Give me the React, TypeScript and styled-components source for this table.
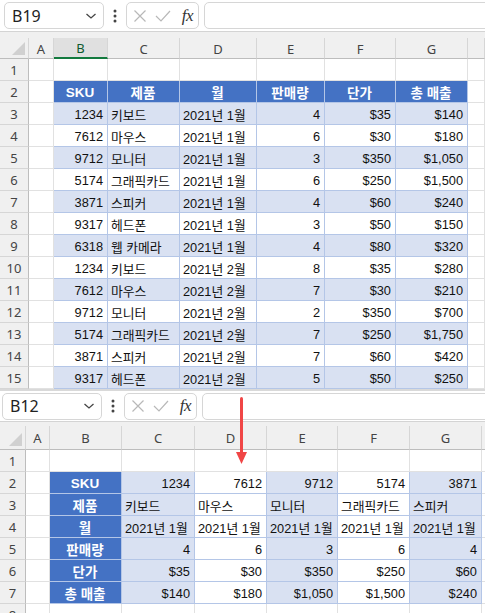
import React from "react";
import styled, { createGlobalStyle } from "styled-components";

const Global = createGlobalStyle`
  html, body { margin: 0; padding: 0; background: #ffffff; }
  body { font-family: "Liberation Sans", "Noto Sans CJK KR", sans-serif; }
  * { box-sizing: border-box; }
`;

const Page = styled.div`
  position: relative;
  width: 485px;
  height: 613px;
  overflow: hidden;
  background: #ffffff;
`;

const SheetWrap = styled.section<{ $top?: boolean }>`
  display: flex;
  flex-direction: column;
  border-top: ${(p) => (p.$top ? "none" : "2px solid #d9d9d9")};
`;

const Toolbar = styled.div<{ $pad: number; $h: number }>`
  display: flex;
  align-items: center;
  height: ${(p) => p.$h}px;
  padding-left: ${(p) => p.$pad}px;
  background: #ffffff;
  border-bottom: 1px solid #d4d4d4;
`;

const NameBox = styled.div`
  width: 100px;
  height: 27px;
  border: 1px solid #d6d6d6;
  border-radius: 5px;
  display: flex;
  align-items: center;
  justify-content: space-between;
  padding: 0 6px 0 7px;
  font-family: "Noto Sans", "Liberation Sans", sans-serif;
  font-size: 16px;
  color: #222;
`;

const Dots = styled.div`
  width: 22px;
  display: flex;
  justify-content: center;
`;

const FxBox = styled.div`
  width: 73px;
  height: 27px;
  border: 1px solid #d6d6d6;
  border-radius: 5px;
  display: flex;
  align-items: center;
  padding: 0 5px 0 6px;
  gap: 8px;
`;

const FxText = styled.span`
  font-family: "Liberation Serif", serif;
  font-style: italic;
  font-size: 17px;
  color: #333;
  margin-left: auto;
  letter-spacing: -0.5px;
`;

const Formula = styled.div`
  flex: 1;
  height: 27px;
  margin-left: 5px;
  margin-right: -8px;
  border: 1px solid #d6d6d6;
  border-radius: 5px;
`;

const Strip = styled.div<{ $h: number }>`
  height: ${(p) => p.$h}px;
  background: #f0f0f0;
`;

const Grid = styled.div<{ $cols: string; $head: number }>`
  display: grid;
  grid-template-columns: ${(p) => p.$cols};
  grid-template-rows: ${(p) => p.$head}px;
  grid-auto-rows: 22px;
  font-size: 12.8px;
  color: #111;
`;

const Corner = styled.div`
  background: #f0f0f0;
  border-right: 1px solid #d6d6d6;
  border-bottom: 1px solid #bdbdbd;
  display: flex;
  align-items: flex-end;
  justify-content: flex-end;
  padding: 0 3px 3px 0;
`;

const ColHead = styled.div<{ $sel?: boolean }>`
  display: flex;
  align-items: center;
  justify-content: center;
  background: ${(p) => (p.$sel ? "#e0e0e0" : "#f0f0f0")};
  border-right: 1px solid #d6d6d6;
  border-bottom: ${(p) => (p.$sel ? "2px solid #137a3e" : "1px solid #bdbdbd")};
  font-family: "Noto Sans", sans-serif;
  font-size: 13px;
  color: ${(p) => (p.$sel ? "#0f5a2e" : "#444")};
  padding-top: 1px;
`;

const RowHead = styled.div`
  display: flex;
  align-items: center;
  justify-content: center;
  background: #f0f0f0;
  border-right: 1px solid #bdbdbd;
  border-bottom: 1px solid #d6d6d6;
  font-family: "Noto Sans", sans-serif;
  font-size: 13px;
  color: #444;
`;

type Kind = "empty" | "head" | "band" | "plain";

const Cell = styled.div<{ $kind: Kind; $align: "left" | "right" | "center" }>`
  display: flex;
  align-items: center;
  justify-content: ${(p) =>
    p.$align === "right" ? "flex-end" : p.$align === "center" ? "center" : "flex-start"};
  padding: 1px 4px 0 3px;
  white-space: nowrap;
  overflow: hidden;
  background: ${(p) =>
    p.$kind === "head" ? "#4472c4" : p.$kind === "band" ? "#d9e1f2" : "#ffffff"};
  color: ${(p) => (p.$kind === "head" ? "#ffffff" : "#111")};
  font-weight: ${(p) => (p.$kind === "head" ? 700 : 400)};
  font-size: ${(p) => (p.$kind === "head" ? "13.5px" : "inherit")};
  border-right: 1px solid ${(p) => (p.$kind === "empty" ? "#e1e1e1" : "#b4c6e7")};
  border-bottom: 1px solid ${(p) => (p.$kind === "empty" ? "#e1e1e1" : "#b4c6e7")};
`;

const ArrowLayer = styled.div`
  position: absolute;
  left: 235px;
  top: 397px;
  width: 13px;
  height: 68px;
`;

const Chevron = () => (
  <svg width="12" height="8" viewBox="0 0 12 8">
    <polyline points="1.5,2 6,6 10.5,2" fill="none" stroke="#444" strokeWidth="1.3" />
  </svg>
);

const VDots = () => (
  <svg width="4" height="14" viewBox="0 0 4 14">
    <circle cx="2" cy="2" r="1.5" fill="#444" />
    <circle cx="2" cy="7" r="1.5" fill="#444" />
    <circle cx="2" cy="12" r="1.5" fill="#444" />
  </svg>
);

const XIcon = () => (
  <svg width="14" height="14" viewBox="0 0 14 14">
    <path d="M1.5 1.5 L12.5 12.5 M12.5 1.5 L1.5 12.5" stroke="#b8b8b8" strokeWidth="1.2" fill="none" />
  </svg>
);

const CheckIcon = () => (
  <svg width="16" height="14" viewBox="0 0 16 14">
    <path d="M1 7 L6 12 L15 2" stroke="#b8b8b8" strokeWidth="1.2" fill="none" />
  </svg>
);

const CornerTri = () => (
  <svg width="13" height="13" viewBox="0 0 13 13">
    <polygon points="13,0 13,13 0,13" fill="#d0d0d0" />
  </svg>
);

type Row = { n: number; cells: { t: string; k: Kind; a: "left" | "right" | "center" }[] };

const FormulaBar = ({ name, pad, h }: { name: string; pad: number; h: number }) => (
  <Toolbar $pad={pad} $h={h}>
    <NameBox>
      <span>{name}</span>
      <Chevron />
    </NameBox>
    <Dots>
      <VDots />
    </Dots>
    <FxBox>
      <XIcon />
      <CheckIcon />
      <FxText>fx</FxText>
    </FxBox>
    <Formula />
  </Toolbar>
);

const Sheet = ({
  name,
  pad,
  barH,
  strip,
  head,
  cols,
  letters,
  sel,
  rows,
  top,
}: {
  name: string;
  pad: number;
  barH: number;
  strip: number;
  head: number;
  cols: string;
  letters: string[];
  sel?: string;
  rows: Row[];
  top?: boolean;
}) => (
  <SheetWrap $top={top}>
    <FormulaBar name={name} pad={pad} h={barH} />
    <Strip $h={strip} />
    <Grid $cols={cols} $head={head}>
      <Corner>
        <CornerTri />
      </Corner>
      {letters.map((l, i) => (
        <ColHead key={i} $sel={l === sel}>
          {l}
        </ColHead>
      ))}
      {rows.map((r) => (
        <React.Fragment key={r.n}>
          <RowHead>{r.n}</RowHead>
          {r.cells.map((c, i) => (
            <Cell key={i} $kind={c.k} $align={c.a}>
              {c.t}
            </Cell>
          ))}
        </React.Fragment>
      ))}
    </Grid>
  </SheetWrap>
);

const data: [string, string, string, string, string, string][] = [
  ["1234", "키보드", "2021년 1월", "4", "$35", "$140"],
  ["7612", "마우스", "2021년 1월", "6", "$30", "$180"],
  ["9712", "모니터", "2021년 1월", "3", "$350", "$1,050"],
  ["5174", "그래픽카드", "2021년 1월", "6", "$250", "$1,500"],
  ["3871", "스피커", "2021년 1월", "4", "$60", "$240"],
  ["9317", "헤드폰", "2021년 1월", "3", "$50", "$150"],
  ["6318", "웹 카메라", "2021년 1월", "4", "$80", "$320"],
  ["1234", "키보드", "2021년 2월", "8", "$35", "$280"],
  ["7612", "마우스", "2021년 2월", "7", "$30", "$210"],
  ["9712", "모니터", "2021년 2월", "2", "$350", "$700"],
  ["5174", "그래픽카드", "2021년 2월", "7", "$250", "$1,750"],
  ["3871", "스피커", "2021년 2월", "7", "$60", "$420"],
  ["9317", "헤드폰", "2021년 2월", "5", "$50", "$250"],
];

const headers = ["SKU", "제품", "월", "판매량", "단가", "총 매출"];
const aligns: ("left" | "right")[] = ["right", "left", "left", "right", "right", "right"];

const empty = (n: number) =>
  Array.from({ length: n }, () => ({ t: "", k: "empty" as Kind, a: "left" as const }));

const topRows: Row[] = [
  { n: 1, cells: empty(8) },
  {
    n: 2,
    cells: [
      ...empty(1),
      ...headers.map((h) => ({ t: h, k: "head" as Kind, a: "center" as const })),
      ...empty(1),
    ],
  },
  ...data.map((d, i) => ({
    n: i + 3,
    cells: [
      ...empty(1),
      ...d.map((t, j) => ({ t, k: (i % 2 === 0 ? "band" : "plain") as Kind, a: aligns[j] })),
      ...empty(1),
    ],
  })),
];

const bottomRows: Row[] = [
  { n: 1, cells: empty(8) },
  ...headers.map((h, r) => ({
    n: r + 2,
    cells: [
      ...empty(1),
      { t: h, k: "head" as Kind, a: "center" as const },
      ...data.slice(0, 5).map((d, c) => ({
        t: d[r],
        k: (c % 2 === 0 ? "band" : "plain") as Kind,
        a: aligns[r],
      })),
      ...empty(1),
    ],
  })),
  { n: 8, cells: empty(8) },
];

const letters = ["A", "B", "C", "D", "E", "F", "G", ""];

export default function App() {
  return (
    <Page>
      <Global />
      <Sheet
        top
        name="B19"
        pad={4}
        barH={32}
        strip={6}
        head={21}
        cols="29px 25px 54px 72px 77px 68px 71px 72px 1fr"
        letters={letters}
        sel="B"
        rows={topRows}
      />
      <Sheet
        name="B12"
        pad={2}
        barH={31}
        strip={4}
        head={24}
        cols="26px 24px 72px 73px 72px 71px 72px 72px 1fr"
        letters={letters}
        rows={bottomRows}
      />
      <ArrowLayer>
        <svg width="13" height="68" viewBox="0 0 13 68">
          <line x1="6.5" y1="1.5" x2="6.5" y2="56" stroke="#f04646" strokeWidth="3" strokeLinecap="round" />
          <polygon points="1,55 12,55 6.5,67" fill="#f04646" />
        </svg>
      </ArrowLayer>
    </Page>
  );
}
